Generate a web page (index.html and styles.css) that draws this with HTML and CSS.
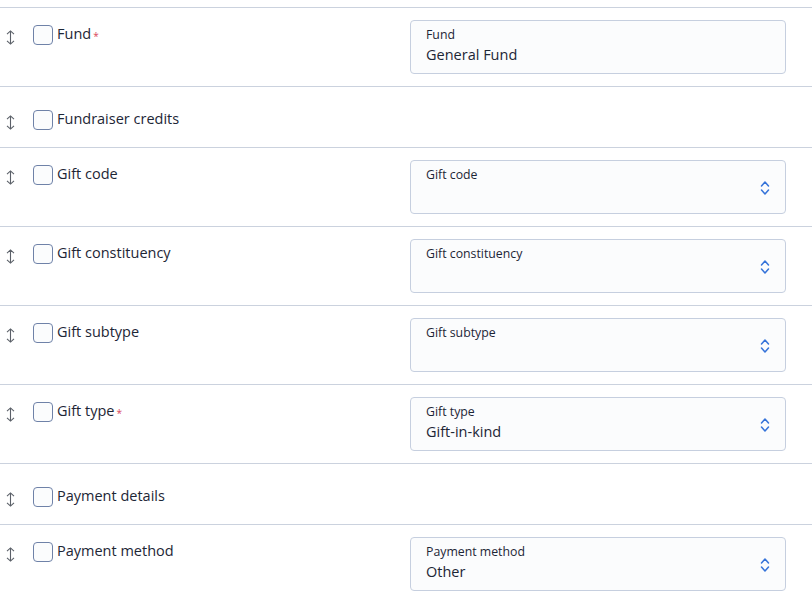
FILE: index.html
```html
<!DOCTYPE html>
<html lang="en">
<head>
<meta charset="utf-8">
<title>Fields</title>
<link rel="stylesheet" href="styles.css">
</head>
<body>
<div class="field-list">

  <div class="field-row">
    <div class="field-left">
      <span class="drag"><svg viewBox="0 0 9 15" width="9" height="15"><path d="M4.5 1 V14 M1 4.2 L4.5 0.9 L8 4.2 M1 10.8 L4.5 14.1 L8 10.8" fill="none" stroke="#5b6068" stroke-width="1.1"/></svg></span>
      <span class="check"></span>
      <span class="field-name">Fund<span class="req">*</span></span>
    </div>
    <div class="field-box">
      <div class="box-text">
        <span class="box-label">Fund</span>
        <span class="box-value">General Fund</span>
      </div>
    </div>
  </div>

  <div class="field-row plain">
    <div class="field-left">
      <span class="drag"><svg viewBox="0 0 9 15" width="9" height="15"><path d="M4.5 1 V14 M1 4.2 L4.5 0.9 L8 4.2 M1 10.8 L4.5 14.1 L8 10.8" fill="none" stroke="#5b6068" stroke-width="1.1"/></svg></span>
      <span class="check"></span>
      <span class="field-name">Fundraiser credits</span>
    </div>
  </div>

  <div class="field-row">
    <div class="field-left">
      <span class="drag"><svg viewBox="0 0 9 15" width="9" height="15"><path d="M4.5 1 V14 M1 4.2 L4.5 0.9 L8 4.2 M1 10.8 L4.5 14.1 L8 10.8" fill="none" stroke="#5b6068" stroke-width="1.1"/></svg></span>
      <span class="check"></span>
      <span class="field-name">Gift code</span>
    </div>
    <div class="field-box">
      <div class="box-text">
        <span class="box-label">Gift code</span>
        <span class="box-value"></span>
      </div>
      <svg class="chev" viewBox="0 0 10 16" width="10" height="16"><path d="M1.5 6 L5 2 L8.5 6 M1.5 10 L5 14 L8.5 10" fill="none" stroke="#3573d9" stroke-width="1.5" stroke-linecap="round" stroke-linejoin="round"/></svg>
    </div>
  </div>

  <div class="field-row">
    <div class="field-left">
      <span class="drag"><svg viewBox="0 0 9 15" width="9" height="15"><path d="M4.5 1 V14 M1 4.2 L4.5 0.9 L8 4.2 M1 10.8 L4.5 14.1 L8 10.8" fill="none" stroke="#5b6068" stroke-width="1.1"/></svg></span>
      <span class="check"></span>
      <span class="field-name">Gift constituency</span>
    </div>
    <div class="field-box">
      <div class="box-text">
        <span class="box-label">Gift constituency</span>
        <span class="box-value"></span>
      </div>
      <svg class="chev" viewBox="0 0 10 16" width="10" height="16"><path d="M1.5 6 L5 2 L8.5 6 M1.5 10 L5 14 L8.5 10" fill="none" stroke="#3573d9" stroke-width="1.5" stroke-linecap="round" stroke-linejoin="round"/></svg>
    </div>
  </div>

  <div class="field-row">
    <div class="field-left">
      <span class="drag"><svg viewBox="0 0 9 15" width="9" height="15"><path d="M4.5 1 V14 M1 4.2 L4.5 0.9 L8 4.2 M1 10.8 L4.5 14.1 L8 10.8" fill="none" stroke="#5b6068" stroke-width="1.1"/></svg></span>
      <span class="check"></span>
      <span class="field-name">Gift subtype</span>
    </div>
    <div class="field-box">
      <div class="box-text">
        <span class="box-label">Gift subtype</span>
        <span class="box-value"></span>
      </div>
      <svg class="chev" viewBox="0 0 10 16" width="10" height="16"><path d="M1.5 6 L5 2 L8.5 6 M1.5 10 L5 14 L8.5 10" fill="none" stroke="#3573d9" stroke-width="1.5" stroke-linecap="round" stroke-linejoin="round"/></svg>
    </div>
  </div>

  <div class="field-row">
    <div class="field-left">
      <span class="drag"><svg viewBox="0 0 9 15" width="9" height="15"><path d="M4.5 1 V14 M1 4.2 L4.5 0.9 L8 4.2 M1 10.8 L4.5 14.1 L8 10.8" fill="none" stroke="#5b6068" stroke-width="1.1"/></svg></span>
      <span class="check"></span>
      <span class="field-name">Gift type<span class="req">*</span></span>
    </div>
    <div class="field-box">
      <div class="box-text">
        <span class="box-label">Gift type</span>
        <span class="box-value">Gift-in-kind</span>
      </div>
      <svg class="chev" viewBox="0 0 10 16" width="10" height="16"><path d="M1.5 6 L5 2 L8.5 6 M1.5 10 L5 14 L8.5 10" fill="none" stroke="#3573d9" stroke-width="1.5" stroke-linecap="round" stroke-linejoin="round"/></svg>
    </div>
  </div>

  <div class="field-row plain">
    <div class="field-left">
      <span class="drag"><svg viewBox="0 0 9 15" width="9" height="15"><path d="M4.5 1 V14 M1 4.2 L4.5 0.9 L8 4.2 M1 10.8 L4.5 14.1 L8 10.8" fill="none" stroke="#5b6068" stroke-width="1.1"/></svg></span>
      <span class="check"></span>
      <span class="field-name">Payment details</span>
    </div>
  </div>

  <div class="field-row">
    <div class="field-left">
      <span class="drag"><svg viewBox="0 0 9 15" width="9" height="15"><path d="M4.5 1 V14 M1 4.2 L4.5 0.9 L8 4.2 M1 10.8 L4.5 14.1 L8 10.8" fill="none" stroke="#5b6068" stroke-width="1.1"/></svg></span>
      <span class="check"></span>
      <span class="field-name">Payment method</span>
    </div>
    <div class="field-box">
      <div class="box-text">
        <span class="box-label">Payment method</span>
        <span class="box-value">Other</span>
      </div>
      <svg class="chev" viewBox="0 0 10 16" width="10" height="16"><path d="M1.5 6 L5 2 L8.5 6 M1.5 10 L5 14 L8.5 10" fill="none" stroke="#3573d9" stroke-width="1.5" stroke-linecap="round" stroke-linejoin="round"/></svg>
    </div>
  </div>

</div>
</body>
</html>
```

FILE: styles.css
```css
html, body {
  margin: 0;
  padding: 0;
  background: #ffffff;
}

body {
  padding-top: 7px;
  font-family: "Open Sans", "Noto Sans", sans-serif;
  color: #1d2636;
}

.field-list {
  border-top: 1px solid #cbd2de;
}

/* one configurable field: drag handle, checkbox, name, optional input */
.field-row {
  display: flex;
  align-items: flex-start;
  height: 79px;
  padding-top: 12px;
  box-sizing: border-box;
  border-bottom: 1px solid #cbd2de;
}

.field-row.plain {
  height: 61px;
  padding-top: 23px;
}

.field-left {
  display: flex;
  align-items: center;
  width: 410px;
  flex: none;
  padding-top: 5px;
  height: 20px;
}

.field-row.plain .field-left {
  padding-top: 0;
}

.drag {
  display: flex;
  align-self: flex-start;
  width: 33px;
  flex: none;
  padding: 5px 0 0 6px;
  box-sizing: border-box;
  height: 20px;
}

.check {
  width: 18px;
  height: 18px;
  border: 1px solid #6f82a8;
  border-radius: 4px;
  background: #fbfcfd;
  flex: none;
}

.field-name {
  margin-left: 4px;
  font-size: 14.5px;
  line-height: 20px;
  position: relative;
  top: -1px;
  white-space: nowrap;
}

.req {
  color: #d9455a;
  font-size: 10px;
  margin-left: 2px;
  position: relative;
  top: 1px;
}

/* floating-label input / select */
.field-box {
  display: flex;
  align-items: center;
  width: 376px;
  height: 54px;
  box-sizing: border-box;
  border: 1px solid #c6cfdf;
  border-radius: 4px;
  background: #fbfcfd;
  padding: 6px 15px 0 15px;
}

.box-text {
  flex: 1;
  display: flex;
  flex-direction: column;
  align-self: stretch;
}

.box-label {
  font-size: 12.3px;
  line-height: 16px;
}

.box-value {
  font-size: 14.5px;
  line-height: 23px;
  min-height: 23px;
}

.chev {
  flex: none;
  margin-top: -5px;
}
```
